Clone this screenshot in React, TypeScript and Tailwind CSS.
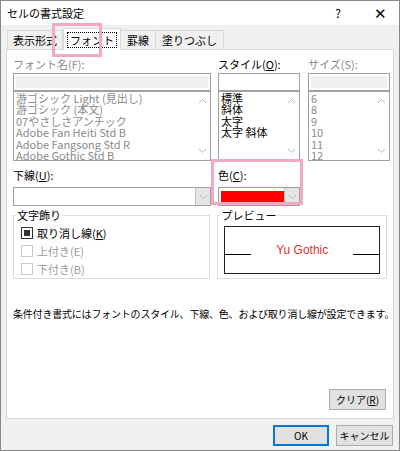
import React from "react";

const Arrow = ({ up }: { up?: boolean }) => (
  <svg width="9" height="6" viewBox="0 0 9 6" className="text-[#b8b8b8]">
    <path d={up ? "M1 5 L4.5 1.5 L8 5" : "M1 1 L4.5 4.5 L8 1"} fill="none" stroke="currentColor" strokeWidth="1" />
  </svg>
);

const List = ({ items, w, dim }: { items: string[]; w: string; dim?: boolean }) => (
  <div className={`${w} h-[70px] border border-[#a0a0a0] bg-white flex`}>
    <div className={`flex-1 pl-[2px] pt-[1px] leading-[11.4px] text-[11px] ${dim ? "text-[#8a8a8a]" : "text-black"} overflow-hidden`}>
      {items.map((t) => <div key={t} className="whitespace-nowrap h-[11.4px]">{t}</div>)}
    </div>
    <div className="w-[16px] flex flex-col justify-between items-center py-[6px]">
      <Arrow up />
      <Arrow />
    </div>
  </div>
);

const Chk = ({ label, on }: { label: React.ReactNode; on?: boolean }) => (
  <div className={`flex items-center gap-[4px] h-[18px] leading-[13px] ${on ? "text-black" : "text-[#9a9a9a]"}`}>
    <div className={`w-[12px] h-[12px] border ${on ? "border-[#333]" : "border-[#c8c8c8]"} bg-white flex items-center justify-center`}>
      {on && <div className="w-[6px] h-[6px] bg-[#333]" />}
    </div>
    <span>{label}</span>
  </div>
);

export default function App() {
  return (
    <div className="w-[400px] h-[451px] bg-[#f0f0f0] border border-[#888] relative text-[11px] leading-[14px] text-black overflow-hidden" style={{ fontFamily: '"Noto Sans CJK JP", "Noto Sans", sans-serif' }}>
      <div className="h-[24px] bg-white flex items-center px-[6px]">
        <span className="text-[11px]">セルの書式設定</span>
        <span className="ml-auto mr-[33px] text-[12px]">?</span>
        <span className="mr-[6px] text-[15px] font-light">✕</span>
      </div>
      <div className="flex items-end h-[24px] pl-[6px]">
        <div className="h-[19px] px-[5px] flex items-center border border-b-0 border-[#d9d9d9] bg-[#f0f0f0]">表示形式</div>
        <div className="h-[22px] px-[3px] flex items-center border border-b-0 border-[#d9d9d9] bg-white -mb-px z-10">
          <span className="border border-dotted border-black px-[2px] leading-[14px]">フォント</span>
        </div>
        <div className="h-[19px] px-[6px] flex items-center border border-b-0 border-l-0 border-[#d9d9d9]">罫線</div>
        <div className="h-[19px] px-[6px] flex items-center border border-b-0 border-l-0 border-[#d9d9d9]">塗りつぶし</div>
      </div>
      <div className="mx-[5px] h-[370px] bg-white border border-[#d9d9d9] px-[6px] pt-[6px] relative">
        <div className="flex gap-[7px]">
          <div className="w-[198px]">
            <div className="text-[#8a8a8a] h-[16px] leading-[16px]">フォント名(F):</div>
            <div className="h-[18px] border border-[#a0a0a0] bg-white p-[2px] mt-[1px]"><div className="h-full bg-[#f0f0f0]" /></div>
            <List w="w-[198px]" dim items={["游ゴシック Light (見出し)", "游ゴシック (本文)", "07やさしさアンチック", "Adobe Fan Heiti Std B", "Adobe Fangsong Std R", "Adobe Gothic Std B"]} />
          </div>
          <div className="w-[82px]">
            <div className="h-[16px] leading-[16px]">スタイル(<u>O</u>):</div>
            <div className="h-[18px] border border-[#a0a0a0] bg-white mt-[1px]" />
            <List w="w-[82px]" items={["標準", "斜体", "太字", "太字 斜体"]} />
          </div>
          <div className="w-[82px] ml-[1px]">
            <div className="text-[#8a8a8a] h-[16px] leading-[16px]">サイズ(S):</div>
            <div className="h-[18px] border border-[#a0a0a0] bg-white p-[2px] mt-[1px]"><div className="h-full bg-[#f0f0f0]" /></div>
            <List w="w-[82px]" dim items={["6", "8", "9", "10", "11", "12"]} />
          </div>
        </div>
        <div className="flex gap-[7px] mt-[6px]">
          <div className="w-[198px]">
            <div className="h-[16px] leading-[16px]">下線(<u>U</u>):</div>
            <div className="h-[19px] mt-[4px] border border-[#a0a0a0] bg-white flex justify-end">
              <div className="w-[15px] bg-[#e6e6e6] border-l border-[#c0c0c0] flex items-center justify-center"><Arrow /></div>
            </div>
          </div>
          <div className="w-[82px]">
            <div className="h-[16px] leading-[16px]">色(<u>C</u>):</div>
            <div className="h-[19px] mt-[4px] border border-[#a0a0a0] bg-white flex items-center pl-[2px]">
              <div className="w-[63px] h-[11px] bg-[#ff0000]" />
              <div className="ml-auto w-[15px] h-full bg-[#e6e6e6] border-l border-[#c0c0c0] flex items-center justify-center"><Arrow /></div>
            </div>
          </div>
        </div>
        <div className="flex gap-[7px] mt-[9px]">
          <div className="w-[198px] h-[64px] border border-[#dcdcdc] relative pl-[7px] pt-[8px]">
            <span className="absolute -top-[8px] left-[2px] bg-white px-[1px]">文字飾り</span>
            <Chk on label={<>取り消し線(<u>K</u>)</>} />
            <Chk label="上付き(E)" />
            <Chk label="下付き(B)" />
          </div>
          <div className="w-[170px] h-[64px] border border-[#dcdcdc] relative px-[6px] pt-[10px]">
            <span className="absolute -top-[8px] left-[2px] bg-white px-[1px]">プレビュー</span>
            <div className="h-[48px] border border-[#222] flex items-center">
              <div className="w-[26px] h-px bg-black mt-[8px]" />
              <div className="flex-1 text-center text-[#e03030] text-[12px]" style={{ fontFamily: '"Liberation Sans", sans-serif' }}>Yu Gothic</div>
              <div className="w-[26px] h-px bg-black mt-[8px]" />
            </div>
          </div>
        </div>
        <div className="mt-[28px] text-[10px] whitespace-nowrap tracking-[-0.2px]">条件付き書式にはフォントのスタイル、下線、色、および取り消し線が設定できます。</div>
        <div className="absolute right-[7px] bottom-[8px] w-[57px] h-[21px] border border-[#adadad] bg-[#e1e1e1] flex items-center justify-center text-[10px]">クリア(<u>R</u>)</div>
      </div>
      <div className="flex justify-end gap-[7px] pr-[6px] mt-[6px]">
        <div className="w-[56px] h-[21px] border-2 border-[#0078d7] bg-[#e1e1e1] flex items-center justify-center text-[10px]">OK</div>
        <div className="w-[57px] h-[21px] border border-[#adadad] bg-[#e1e1e1] flex items-center justify-center text-[10px]">キャンセル</div>
      </div>
      <div className="absolute left-[51px] top-[22px] w-[50px] h-[34px] border-[3px] border-[#f2a9c4] z-20" />
      <div className="absolute left-[210px] top-[158px] w-[92px] h-[46px] border-[3px] border-[#f2a9c4] z-20" />
    </div>
  );
}
